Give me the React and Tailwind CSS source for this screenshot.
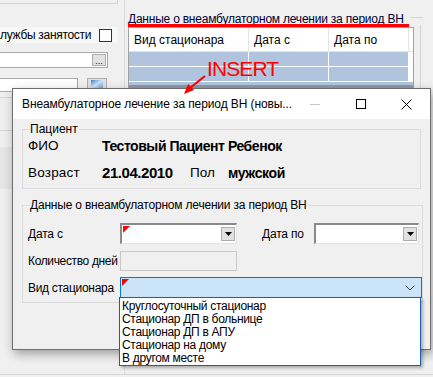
import React from 'react';

const DropBtn = () => (
  <div className="w-[14px] h-[14px] bg-[#e1e1e1] border border-[#adadad] flex items-center justify-center">
    <svg width="7" height="4" viewBox="0 0 7 4">
      <path d="M0 0h7L3.5 4z" fill="#000" />
    </svg>
  </div>
);

const RedMark = () => (
  <svg className="absolute left-[1px] top-[1px]" width="7" height="7" viewBox="0 0 7 7">
    <path d="M0 0h7L0 7z" fill="#ff0000" />
  </svg>
);

const DateBox = ({ w, mark }) => (
  <div
    className={`relative h-[21px] bg-white border-t-2 border-l-2 border-t-[#8a8a8a] border-l-[#8a8a8a] border-b border-r border-b-[#e3e3e3] border-r-[#e3e3e3] flex items-center justify-end pr-[1px] ${w}`}
  >
    {mark && <RedMark />}
    <DropBtn />
  </div>
);

export default function App() {
  const items = [
    'Круглосуточный стационар',
    'Стационар ДП в больнице',
    'Стационар ДП в АПУ',
    'Стационар на дому',
    'В другом месте',
  ];

  return (
    <div className="relative w-[433px] h-[377px] overflow-hidden bg-[#f0f0f0] text-[12px] text-black font-['Liberation_Sans',Arial,sans-serif]">
      {/* background window */}
      <div className="flex flex-col h-full">
        <div className="flex h-[374px]">
          {/* left column */}
          <div className="w-[124px] flex flex-col">
            <div className="w-[118px] h-[4px] border-b border-r border-[#d5d5d5]" />
            <div className="mt-[23px] h-[16px] w-[118px] bg-[#f7f7f7] flex items-center justify-between pr-[6px]">
              <span className="leading-none tracking-[-0.3px]">лужбы занятости</span>
              <div className="w-[13px] h-[13px] border border-[#333] bg-white" />
            </div>
            <div className="mt-[9px] h-[16px] w-[108px] bg-white border border-[#a9a9a9] border-l-0 flex items-center justify-end pr-[1px]">
              <div className="w-[14px] h-[12px] bg-[#e1e1e1] border border-[#adadad] flex items-end justify-center text-[9px] leading-[8px]">...</div>
            </div>
            <div className="mt-[10px] flex items-start gap-[9px]">
              <div className="w-[78px] h-[14px] bg-white border border-[#a9a9a9] border-l-0" />
              <div className="w-[20px] h-[12px] bg-[#e1e1e1] border border-[#adadad] flex items-center justify-center">
                <div className="w-[12px] h-[8px] bg-gradient-to-br from-[#3f7fc8] via-[#cfe3f5] to-[#6aa0d8]" />
              </div>
            </div>
            <div className="mt-[5px] h-[1px] w-[118px] bg-[#d5d5d5]" />
            <div className="mt-[32px] h-[1px] w-[118px] bg-[#d5d5d5]" />
            <div className="mt-[16px] h-[42px] w-[118px] bg-[#e6e6e6]" />
          </div>

          {/* right panel */}
          <div className="flex-1 flex flex-col pt-[11px] pl-[3px] border-l border-[#dadada]">
            <div className="flex items-end h-[14px] pr-[10px]">
              <span className="relative leading-none text-[#000033] whitespace-nowrap tracking-[-0.22px]">
                Данные о внеамбулаторном лечении за период ВН
                <span className="absolute left-0 right-[-5px] top-[11px] h-[3px] bg-[#ff0000]" />
              </span>
              <div className="flex-1 h-[1px] mb-[7px] bg-[#d5d5d5] ml-[6px]" />
            </div>
            <div className="flex pr-[10px] h-[90px]">
              <div className="w-[286px] mt-[2px] border-t border-l border-r border-[#a0a0a0] bg-white flex flex-col">
                <div className="h-[24px] flex border-b border-[#e5e5e5]">
                  <div className="w-[120px] border-r border-[#e5e5e5] pl-[5px] flex items-center">Вид стационара</div>
                  <div className="w-[80px] border-r border-[#e5e5e5] pl-[5px] flex items-center">Дата с</div>
                  <div className="w-[80px] border-r border-[#e5e5e5] pl-[5px] flex items-center">Дата по</div>
                  <div className="flex-1" />
                </div>
                {[0, 1].map((r) => (
                  <div key={r} className="h-[15px] flex border-b border-white bg-[#b0c4de]">
                    <div className="w-[120px] border-r border-white" />
                    <div className="w-[80px] border-r border-white" />
                    <div className="w-[80px] border-r border-white" />
                    <div className="flex-1 bg-white" />
                  </div>
                ))}
                <div className="h-[3px] bg-[#b0c4de]" />
                <div className="flex-1 bg-[#909aa8]" />
              </div>
              <div className="w-[1px] ml-[6px] bg-[#d5d5d5]" />
            </div>
          </div>
        </div>
        <div className="flex-1 border-t border-[#d5d5d5] bg-[#f0f0f0]" />
      </div>

      {/* annotation */}
      <div className="absolute left-[207px] top-[58px] text-[21px] leading-none tracking-[-0.9px] text-[#ff0000] font-['Liberation_Sans',sans-serif] z-20">
        INSERT
      </div>
      <svg className="absolute left-[180px] top-[74px] z-20" width="30" height="26" viewBox="0 0 30 26">
        <path d="M25 2 L10 14" stroke="#ff0000" strokeWidth="2.2" fill="none" />
        <path d="M4 20 L8 10 L14 16 Z" fill="#ff0000" />
      </svg>

      {/* dialog */}
      <div className="absolute left-[12px] top-[88px] w-[419px] h-[262px] border border-[#6d6d6d] bg-[#f0f0f0] shadow-[2px_4px_10px_rgba(0,0,0,0.35)] flex flex-col z-10">
        <div className="h-[30px] bg-white flex items-center">
          <span className="pl-[9px] flex-1 whitespace-nowrap tracking-[-0.1px] text-[12px]">Внеамбулаторное лечение за период ВН (новы...</span>
          <div className="w-[46px] h-[30px] flex items-center justify-center">
            <div className="w-[10px] h-[1px] bg-[#c8c8c8]" />
          </div>
          <div className="w-[46px] h-[30px] flex items-center justify-center">
            <div className="w-[10px] h-[10px] border border-black" />
          </div>
          <div className="w-[46px] h-[30px] flex items-center justify-center">
            <svg width="11" height="11" viewBox="0 0 11 11">
              <path d="M0.5 0.5L10.5 10.5M10.5 0.5L0.5 10.5" stroke="#000" strokeWidth="1" />
            </svg>
          </div>
        </div>

        <div className="px-[9px] pt-[3px] flex flex-col gap-[9px]">
          <fieldset className="border border-[#dcdcdc] h-[67px] px-[5px]">
            <legend className="px-[1px] ml-[1px] text-[12px] leading-[14px]">Пациент</legend>
            <div className="flex items-center h-[16px] mt-[2px]">
              <span className="w-[74px] text-[13.5px]">ФИО</span>
              <span className="font-bold text-[14px] tracking-[-0.45px]">Тестовый Пациент Ребенок</span>
            </div>
            <div className="flex items-center h-[16px] mt-[11px]">
              <span className="w-[74px] text-[13.5px] tracking-[0.2px]">Возраст</span>
              <span className="w-[88px] font-bold text-[15px] tracking-[-0.45px]">21.04.2010</span>
              <span className="w-[38px] text-[13.5px]">Пол</span>
              <span className="font-bold text-[14px] tracking-[-0.4px]">мужской</span>
            </div>
          </fieldset>

          <fieldset className="border border-[#dcdcdc] h-[105px] pl-[5px]">
            <legend className="px-[1px] ml-[1px] text-[12px] leading-[14px] tracking-[-0.2px]">
              Данные о внеамбулаторном лечении за период ВН
            </legend>
            <div className="flex items-center mt-[11px]">
              <span className="w-[92px] tracking-[-0.2px]">Дата с</span>
              <DateBox w="w-[117px]" mark />
              <span className="ml-[25px] w-[52px] tracking-[-0.2px]">Дата по</span>
              <DateBox w="w-[105px]" />
            </div>
            <div className="flex items-center mt-[7px]">
              <span className="w-[92px] tracking-[-0.35px]">Количество дней</span>
              <div className="w-[117px] h-[20px] border border-[#c8c8c8] bg-[#f0f0f0]" />
            </div>
            <div className="flex items-center mt-[6px]">
              <span className="w-[92px] tracking-[-0.3px]">Вид стационара</span>
              <div className="relative w-[302px] h-[21px] bg-[#cce4f7] border border-[#0078d7] flex items-center justify-end pr-[6px]">
                <RedMark />
                <svg width="10" height="6" viewBox="0 0 10 6">
                  <path d="M0.5 0.5L5 5L9.5 0.5" stroke="#444" strokeWidth="1" fill="none" />
                </svg>
              </div>
            </div>
          </fieldset>
        </div>
      </div>

      {/* open list of the combobox */}
      <div className="absolute left-[119px] top-[297px] w-[302px] h-[69px] bg-white border border-[#1660b8] shadow-[2px_2px_3px_rgba(0,0,0,0.3)] z-30 flex flex-col pl-[2px] pt-[2px]">
        {items.map((t) => (
          <div key={t} className="h-[13px] leading-[13px] text-[12px] tracking-[-0.3px] whitespace-nowrap">
            {t}
          </div>
        ))}
      </div>
    </div>
  );
}
